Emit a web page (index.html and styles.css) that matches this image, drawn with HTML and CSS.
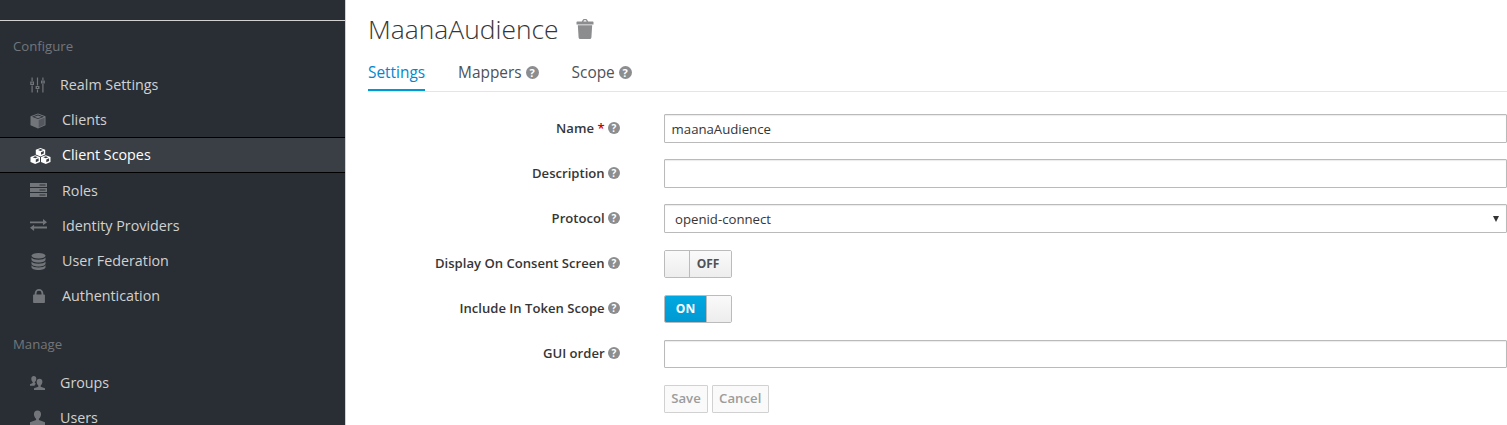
FILE: index.html
```html
<!DOCTYPE html>
<html lang="en">
<head>
    <meta charset="UTF-8">
    <title>MaanaAudience</title>
    <link rel="stylesheet" href="styles.css">
</head>
<body>
    <div class="sidebar">
        <div class="sidebarTop"></div>

        <div class="navSection navSectionFirst">
            <h2 class="navTitle">Configure</h2>
            <a class="navItem navItemTight">
                <svg class="navIcon" viewBox="0 0 15 15"><path d="M1.500 0h1.200v3.500h-1.200zM1.500 8h1.200v7h-1.200zM.2 4h3.800v3.500h-3.800zM6.900 0h1.200v8h-1.200zM6.900 12h1.200v3h-1.200zM5.600 8.500h3.800v3h-3.800zM12.300 0h1.200v2.500h-1.200zM12.300 6.500h1.200v8.500h-1.200zM11 3h3.800v3h-3.800z"/><path class="navIconCut" d="M1.500 5h1.200v1.500h-1.200zM6.900 9.400h1.200v1.200h-1.200zM12.300 3.900h1.200v1.200h-1.200z"/></svg>
                Realm Settings
            </a>
            <a class="navItem">
                <svg class="navIcon navIconCube" viewBox="0 0 16 16"><path d="M8 .5l7.500 2.800v8.900L8 15.500.5 12.200V3.300z"/><path class="navIconCut" d="M8 1.600L2 3.800l6 2.300 6-2.300zM8 2.400l3.900 1.400L8 5.300 4.100 3.800z"/><path class="navIconShade" d="M8.700 6.900l5.900-2.200v7l-5.900 2.700z"/></svg>
                Clients
            </a>
            <a class="navItem navItemActive">
                <svg class="navIcon navIconCubes" viewBox="0 0 21 16"><path d="M10.500 0l4.700 1.800v4.700l-4.700 1.900-4.700-1.900V1.800z"/><path d="M5.200 7.200l4.800 1.800v5l-4.800 2-4.700-2V9z"/><path d="M15.800 7.200l4.700 1.800v5l-4.700 2-4.800-2V9z"/><path class="navIconCut" d="M10.500 1.100L8 2.100l2.500.9 2.500-.9zM5.200 8.300l-2.500 1 2.500.9 2.500-.9zM15.800 8.300l-2.500 1 2.500.9 2.500-.9zM11 4.200l2.800-1.100v2.500L11 6.800zM5.800 11.400l2.800-1.100v2.800l-2.800 1.200zM16.300 11.400l2.800-1.100v2.800l-2.800 1.200z"/></svg>
                Client Scopes
            </a>
            <a class="navItem">
                <svg class="navIcon navIconWide" viewBox="0 0 17 14"><path d="M0 0h17v4h-17zM0 5h17v4h-17zM0 10h17v4h-17z"/><path class="navIconCut" d="M9.500 1.500h6v1h-6zM9.500 6.500h6v1h-6zM9.500 11.500h6v1h-6z"/></svg>
                Roles
            </a>
            <a class="navItem">
                <svg class="navIcon navIconWide" viewBox="0 0 17 12"><path d="M0 2.500h13V0l4 3.300-4 3v-2H0zM17 7.500H4.100V5.700L0 8.800 4.100 12V9.600H17z"/></svg>
                Identity Providers
            </a>
            <a class="navItem">
                <svg class="navIcon navIconDb" viewBox="0 0 15 17"><ellipse cx="7.500" cy="2.800" rx="7" ry="2.800"/><path d="M.5 4.500c1 1.500 3.500 2.200 7 2.200s6-.7 7-2.200v2.300c0 1.500-3 2.700-7 2.700s-7-1.200-7-2.700zM.5 8.500c1 1.500 3.500 2.200 7 2.200s6-.7 7-2.200v2.300c0 1.500-3 2.700-7 2.700s-7-1.200-7-2.700zM.5 12.300c1 1.500 3.500 2.200 7 2.200s6-.7 7-2.200v2c0 1.500-3 2.700-7 2.700s-7-1.200-7-2.700z"/></svg>
                User Federation
            </a>
            <a class="navItem">
                <svg class="navIcon navIconLock" viewBox="0 0 11 13"><path d="M0 5.800c0-.4.300-.7.700-.7h.8V4a4 4 0 0 1 8 0v1.100h.8c.4 0 .7.300.7.700v6.500c0 .4-.3.700-.7.700H.7c-.4 0-.7-.3-.7-.7zM3.200 5.100h4.600V4a2.300 2.300 0 0 0-4.600 0z"/></svg>
                Authentication
            </a>
        </div>

        <div class="navSection">
            <h2 class="navTitle">Manage</h2>
            <a class="navItem navItemTight">
                <svg class="navIcon" viewBox="0 0 15 14"><path d="M3.800 0c1.500 0 2.500 1.100 2.500 2.700 0 1.300-.7 2.700-1.500 3.200v1.200L6 7.800C5.200 8.600 4.600 9 4.500 9.800H0V8.200l2.700-1.100V5.900C1.900 5.400 1.300 4 1.300 2.700 1.300 1.100 2.300 0 3.800 0z"/><path d="M9.500 2.800c1.800 0 2.900 1.300 2.900 3 0 1.500-.8 3-1.700 3.600v1.300l4.300 1.600V14H4v-1.700l4.300-1.600V9.400C7.400 8.800 6.600 7.300 6.600 5.800c0-1.700 1.100-3 2.900-3z"/></svg>
                Groups
            </a>
            <a class="navItem navItemTight">
                <svg class="navIcon" viewBox="0 0 14 14"><path d="M7 0c2.100 0 3.300 1.500 3.300 3.500 0 1.700-.9 3.400-2 4.100v1.300L14 11v3H0v-3l5.700-2.100V7.600c-1.100-.7-2-2.400-2-4.100C3.700 1.500 4.900 0 7 0z"/></svg>
                Users
            </a>
        </div>
    </div>

    <div class="main">
        <div class="pageHead">
            <h1>MaanaAudience</h1>
            <svg class="trash" viewBox="0 0 18 20"><path d="M5.800 2.600L6.700.9C7 .3 7.400 0 8 0h2c.6 0 1 .3 1.300.9l.9 1.700h4.600c.4 0 .7.300.7.700V5.400H.5V3.300c0-.4.300-.7.700-.7zM7.400 2.600h3.200l-.5-1c-.1-.2-.2-.3-.4-.3H8.300c-.2 0-.3.100-.4.300z"/><path d="M1.800 6.300h14.400l-.8 12.200c-.1.900-.7 1.500-1.500 1.500H4.100c-.8 0-1.400-.6-1.500-1.500z"/></svg>
        </div>

        <div class="tabs">
            <a class="tab tabActive">Settings</a>
            <a class="tab">Mappers <span class="help helpLarge">?</span></a>
            <a class="tab">Scope <span class="help helpLarge">?</span></a>
        </div>

        <form class="form">
            <div class="formRow">
                <label class="formLabel">Name <span class="required">*</span> <span class="help">?</span></label>
                <input class="formInput" type="text" value="maanaAudience">
            </div>
            <div class="formRow">
                <label class="formLabel">Description <span class="help">?</span></label>
                <input class="formInput" type="text">
            </div>
            <div class="formRow">
                <label class="formLabel">Protocol <span class="help">?</span></label>
                <div class="formInput formSelect">openid-connect<span class="caret"></span></div>
            </div>
            <div class="formRow">
                <label class="formLabel">Display On Consent Screen <span class="help">?</span></label>
                <div class="toggle">
                    <span class="toggleKnob"></span>
                    <span class="toggleText">OFF</span>
                </div>
            </div>
            <div class="formRow">
                <label class="formLabel">Include In Token Scope <span class="help">?</span></label>
                <div class="toggle">
                    <span class="toggleText toggleOn">ON</span>
                    <span class="toggleKnob toggleKnobRight"></span>
                </div>
            </div>
            <div class="formRow">
                <label class="formLabel">GUI order <span class="help">?</span></label>
                <input class="formInput" type="text">
            </div>
            <div class="formRow formActions">
                <button class="btn" type="button">Save</button>
                <button class="btn" type="button">Cancel</button>
            </div>
        </form>
    </div>
</body>
</html>
```

FILE: styles.css
```css
html, body {
    height: 100%;
}
body {
    margin: 0;
    display: flex;
    overflow: hidden;
    font-family: "Open Sans", "Liberation Sans", sans-serif;
    font-size: 13.2px;
    color: #363636;
    background-color: white;
}
.sidebar {
    width: 345px;
    flex: none;
    background-color: #292e34;
    border-right: 1px solid #d1d1d1;
}
.sidebarTop {
    height: 20px;
    border-bottom: 1px solid #d1d1d1;
}
.navSection {
    padding-top: 8.7px;
}
.navSectionFirst {
    padding-top: 3.1px;
}
.navTitle {
    margin: 0;
    height: 43px;
    line-height: 45px;
    padding-left: 13px;
    font-size: 13.2px;
    font-weight: 400;
    color: #72767b;
}
.navItem {
    display: flex;
    align-items: center;
    height: 35.2px;
    box-sizing: border-box;
    padding-left: 30px;
    font-size: 14.3px;
    color: #d1d1d1;
}
.navItemActive {
    background-color: #393f44;
    border-top: 1px solid #000;
    border-bottom: 1px solid #000;
    padding-bottom: 2px;
    color: #fff;
}
.navItemActive .navIcon {
    fill: #fff;
}
.navItemActive .navIconCut {
    fill: #393f44;
}
.navIcon {
    width: 16px;
    height: 16px;
    margin-right: 16px;
    fill: #72767b;
    flex: none;
}
.navIconCube {
    margin-top: 3px;
}
.navIconShade {
    fill: #54585e;
}
.navIconWide {
    width: 17px;
    margin-right: 15px;
}
.navIconCubes {
    width: 21px;
    margin: 3px 11px 0 0;
}
.navIconDb {
    width: 15px;
    height: 17px;
    margin: 2px 16px 0 1px;
}
.navIconLock {
    width: 12px;
    height: 14px;
    margin: 0 17px 0 3px;
}
.navIconCut {
    fill: #292e34;
}
.navItemTight .navIcon {
    width: 15px;
    margin-right: 15px;
}
.main {
    flex: 1;
    min-width: 0;
    padding-left: 22px;
}
.pageHead {
    display: flex;
    align-items: center;
    height: 58px;
}
.pageHead h1 {
    margin: 0;
    font-size: 26.4px;
    font-weight: 300;
    color: #363636;
}
.trash {
    width: 18px;
    height: 20px;
    margin-left: 17px;
    fill: #8b8d8f;
}
.tabs {
    display: flex;
    gap: 33px;
    height: 33px;
    border-bottom: 1px solid #e5e5e5;
}
.tab {
    display: block;
    height: 33px;
    box-sizing: border-box;
    padding-top: 4px;
    font-size: 15.4px;
    color: #4d5258;
}
.tabActive {
    color: #0088ce;
    border-bottom: 2px solid #0099d3;
}
.help {
    display: inline-block;
    width: 12px;
    height: 12px;
    border-radius: 50%;
    background-color: #8b8d8f;
    color: white;
    font-size: 10px;
    font-weight: 700;
    line-height: 12px;
    text-align: center;
    vertical-align: 1px;
}
.helpLarge {
    width: 13px;
    height: 13px;
    line-height: 13px;
    font-size: 11px;
}
.form {
    padding-top: 22.3px;
}
.formRow {
    display: flex;
    align-items: center;
    height: 28.6px;
    margin-bottom: 16.5px;
}
.formLabel {
    width: 252px;
    flex: none;
    margin-right: 44px;
    padding-bottom: 2px;
    text-align: right;
    font-size: 13.1px;
    font-weight: 600;
}
.required {
    color: #c00;
}
.formInput {
    flex: 1;
    min-width: 0;
    height: 28.6px;
    box-sizing: border-box;
    border: 1px solid #bababa;
    border-radius: 1px;
    padding: 2px 6.600px;
    font-family: inherit;
    font-size: 13.2px;
    color: #363636;
    background-color: white;
    box-shadow: inset 0 1px 1px rgba(3, 3, 3, .08);
}
.formSelect {
    display: flex;
    align-items: center;
    justify-content: space-between;
    padding: 0 7px 0 10px;
}
.caret {
    border-left: 3.500px solid transparent;
    border-right: 3.500px solid transparent;
    border-top: 6px solid #333;
}
.toggle {
    display: flex;
    width: 68px;
    height: 28px;
    box-sizing: border-box;
    border: 1px solid #bbb;
    border-radius: 2px;
    overflow: hidden;
}
.toggleKnob {
    width: 24px;
    background: linear-gradient(#fafafa, #ededed);
    border-right: 1px solid #bbb;
}
.toggleKnobRight {
    flex: 1;
    border-right: none;
    border-left: 1px solid #bbb;
}
.toggleText {
    flex: 1;
    display: flex;
    align-items: center;
    justify-content: center;
    padding-right: 5px;
    font-size: 12px;
    font-weight: 700;
    color: #4d5258;
    background: linear-gradient(#fafafa, #ededed);
}
.toggleOn {
    flex: none;
    width: 41px;
    padding-right: 0;
    color: white;
    background: linear-gradient(#00a8e1, #0099d3);
}
.formActions {
    padding-left: 296px;
    gap: 4px;
}
.btn {
    height: 28.6px;
    padding: 0 6.200px 2px;
    border: 1px solid #d1d1d1;
    border-radius: 1px;
    background-color: #fafafa;
    font-family: inherit;
    font-size: 13.2px;
    font-weight: 600;
    color: #9c9c9c;
}
```
